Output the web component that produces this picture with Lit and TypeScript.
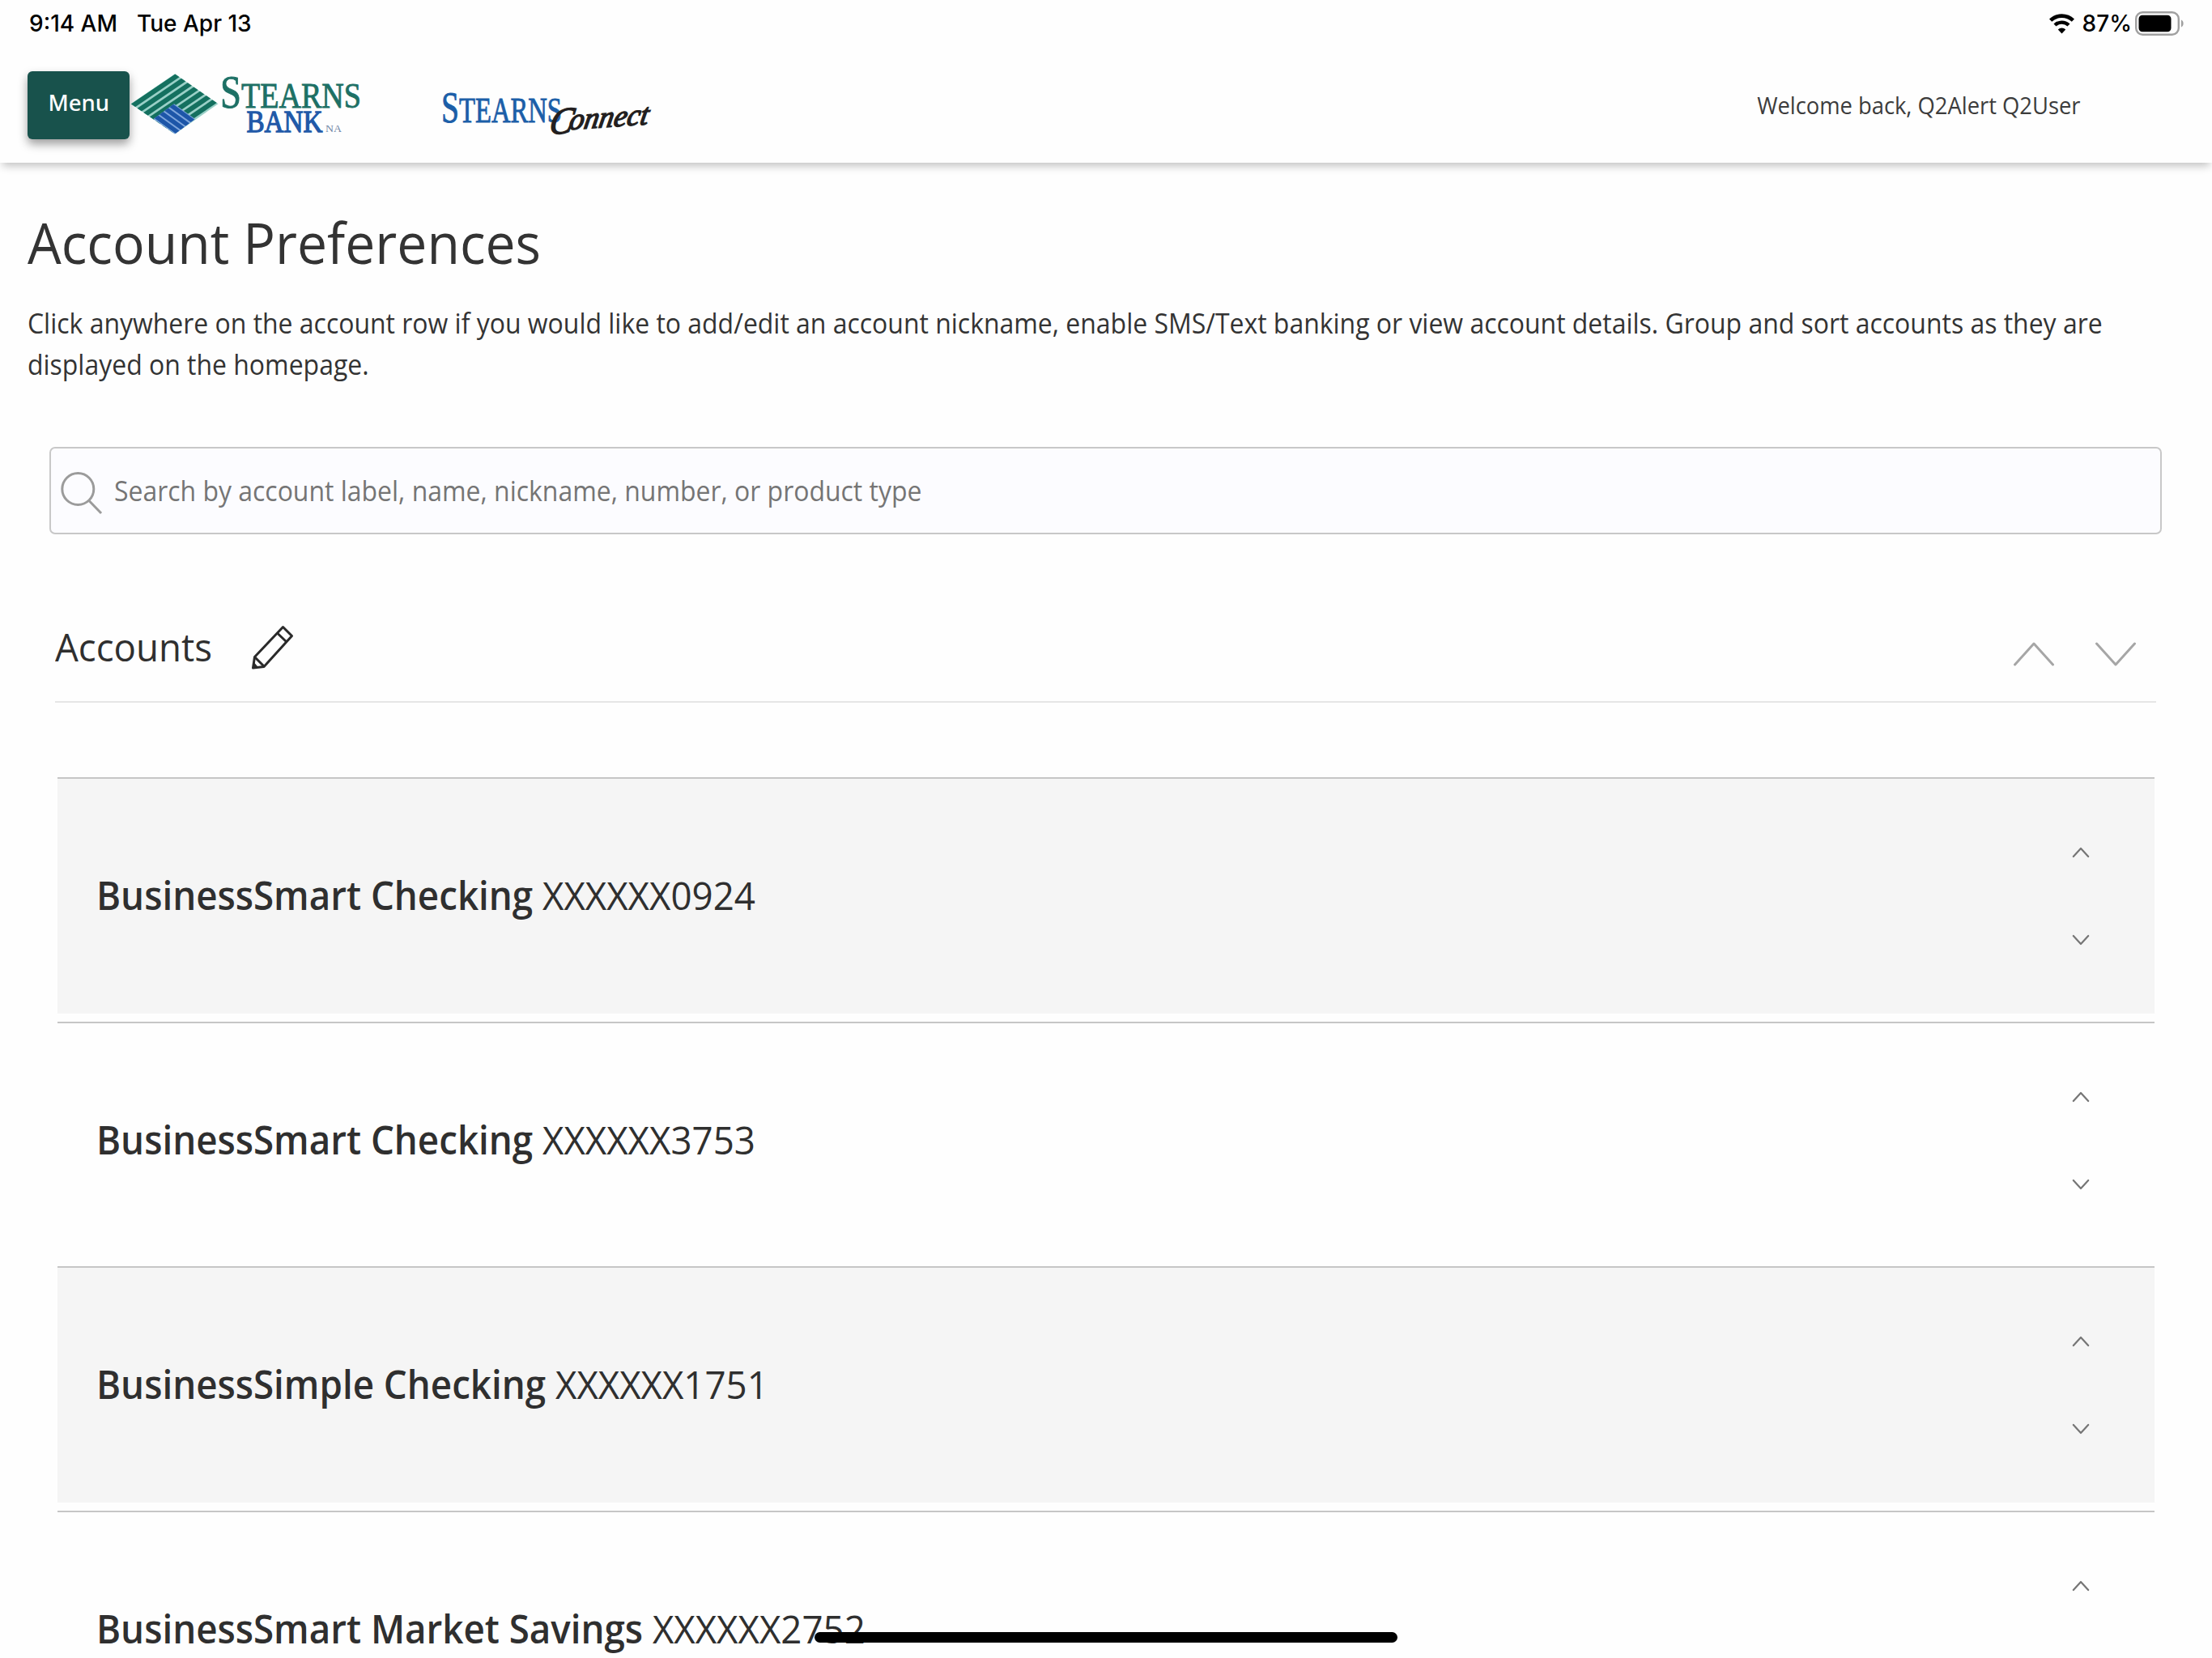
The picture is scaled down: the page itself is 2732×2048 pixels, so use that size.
import { LitElement, html, css, svg } from "lit";
import { customElement, property } from "lit/decorators.js";

interface Account {
  name: string;
  number: string;
}

const ACCOUNTS: Account[] = [
  { name: "BusinessSmart Checking", number: "XXXXXX0924" },
  { name: "BusinessSmart Checking", number: "XXXXXX3753" },
  { name: "BusinessSimple Checking", number: "XXXXXX1751" },
  { name: "BusinessSmart Market Savings", number: "XXXXXX2752" },
];

@customElement("status-bar")
class StatusBar extends LitElement {
  static styles = css`
    :host {
      display: flex;
      align-items: center;
      height: 58px;
      box-sizing: border-box;
      padding: 0 35px 0 36px;
      font: 500 28px/40px Inter, "Liberation Sans", sans-serif;
      color: #000;
    }
    .date { margin-left: 24px; }
    .wifi { margin-left: auto; margin-right: 9px; }
    .pct { margin-right: 4px; }
    svg { display: block; }
  `;
  render() {
    return html`
      <span>9:14 AM</span><span class="date">Tue Apr 13</span>
      <svg class="wifi" width="33" height="26" viewBox="0 0 33 26">
        <path d="M2.6 9.2A20 20 0 0 1 30.4 9.2" fill="none" stroke="#000" stroke-width="4.6"/>
        <path d="M8 15A12.3 12.3 0 0 1 25 15" fill="none" stroke="#000" stroke-width="4.4"/>
        <path d="M16.5 25.4L11.8 20.5A6.8 6.8 0 0 1 21.2 20.5Z"/>
      </svg>
      <span class="pct">87%</span>
      <svg width="60" height="30" viewBox="0 0 60 30">
        <rect x="1.2" y="1.2" width="52.6" height="27.6" rx="8" fill="none" stroke="#a0a0a0" stroke-width="2.4"/>
        <rect x="4.5" y="4.8" width="40" height="20.4" rx="4.5"/>
        <path d="M57 10.5C60.5 11.5 60.5 18.5 57 19.5Z" fill="#a0a0a0"/>
      </svg>
    `;
  }
}

@customElement("brand-logos")
class BrandLogos extends LitElement {
  static styles = css`
    :host { display: block; }
    svg { display: block; overflow: visible; font-family: "Liberation Serif", serif; }
  `;
  render() {
    const green = [0, 1, 2, 3, 4, 5, 6].map((i) => {
      const t = (i + 0.38) / 7;
      const x = 56 + 54 * t;
      const y = 5.4 + 37 * t;
      return svg`<line x1=${x + 6} y1=${y - 4.1} x2=${x - 62} y2=${y + 42} stroke="#14705f" stroke-width="6"/>`;
    });
    const blue = [0, 1, 2, 3].map((i) => {
      const t = (i + 0.5) / 4;
      const x = 55 - 25 * t;
      const y = 42.3 + 18.4 * t;
      return svg`<line x1=${x - 6} y1=${y - 4.3} x2=${x + 32} y2=${y + 23} stroke="#1d56a8" stroke-width="5.4"/>`;
    });
    return html`
      <svg width="660" height="90" viewBox="0 0 660 90">
        <clipPath id="d"><path d="M1.500 42.300L56 5.200L109.500 42.300L56 79.500Z"/></clipPath>
        <clipPath id="b"><path d="M55 42.300L81 61L56 79.500L29.500 61Z"/></clipPath>
        <g clip-path="url(#d)"><rect width="120" height="84" fill="#9ad0c7"/>${green}</g>
        <g clip-path="url(#b)"><rect width="120" height="84" fill="#7fa6dc"/>${blue}</g>
        <g fill="#1d7065" stroke="#1d7065" stroke-width=".9">
          <text x="112" y="47" font-size="56" textLength="26" lengthAdjust="spacingAndGlyphs">S</text>
          <text x="138" y="47" font-size="45" textLength="148" lengthAdjust="spacingAndGlyphs">TEARNS</text>
        </g>
        <text x="144.500" y="77" font-size="38" textLength="94" lengthAdjust="spacingAndGlyphs" fill="#2159a8" stroke="#2159a8" stroke-width="1.300">BANK</text>
        <text x="242" y="77" font-size="12" textLength="20" lengthAdjust="spacingAndGlyphs" fill="#7186a6">NA</text>
        <g fill="#1b5ea8" stroke="#1b5ea8" stroke-width=".9">
          <text x="385" y="64.500" font-size="54" textLength="22" lengthAdjust="spacingAndGlyphs">S</text>
          <text x="407" y="64.500" font-size="44" textLength="127" lengthAdjust="spacingAndGlyphs">TEARNS</text>
        </g>
        <g fill="#231f20" stroke="#231f20" stroke-width="1.500" font-style="italic" transform="translate(517 80) rotate(-4) skewX(-14)">
          <text x="0" y="0" font-size="46" textLength="29" lengthAdjust="spacingAndGlyphs">C</text>
          <text x="24" y="-4" font-size="37" textLength="98" lengthAdjust="spacingAndGlyphs">onnect</text>
        </g>
      </svg>
    `;
  }
}

@customElement("chevron-icon")
class ChevronIcon extends LitElement {
  @property({ type: Boolean }) down = false;
  @property({ type: Boolean }) large = false;
  static styles = css`
    :host, svg { display: block; }
    path { fill: none; stroke-linecap: round; stroke-linejoin: round; }
    .lg { stroke: #a6a6a6; stroke-width: 3; }
    .sm { stroke: #757575; stroke-width: 2.2; }
  `;
  render() {
    return this.large
      ? html`<svg width="50" height="30" viewBox="0 0 50 30"><path class="lg" d=${this.down ? "M1.500 2L25 28L48.500 2" : "M1.500 28L25 2L48.500 28"}/></svg>`
      : html`<svg width="22" height="14" viewBox="0 0 22 14"><path class="sm" d=${this.down ? "M1.800 2L11 12L20.200 2" : "M1.800 12L11 2L20.200 12"}/></svg>`;
  }
}

@customElement("account-row")
class AccountRow extends LitElement {
  @property({ attribute: false }) account!: Account;
  @property({ type: Boolean, reflect: true }) shaded = false;
  static styles = css`
    :host {
      display: flex;
      align-items: center;
      justify-content: space-between;
      box-sizing: border-box;
      height: 292px;
      margin-bottom: 10px;
      padding: 0 80px 2px 47.5px;
      border-top: 2px solid #c6c6c6;
      color: #2f2f2f;
      flex: none;
    }
    :host([shaded]) { background: #f5f5f5; }
    .label {
      font-size: 48px;
      line-height: 66px;
      white-space: nowrap;
      transform: scaleX(0.952);
      transform-origin: left;
    }
    b { font-weight: 600; }
    .sort { display: flex; flex-direction: column; gap: 94px; margin-top: 3px; }
  `;
  render() {
    return html`
      <div class="label"><b>${this.account.name}</b> ${this.account.number}</div>
      <div class="sort">
        <chevron-icon></chevron-icon>
        <chevron-icon down></chevron-icon>
      </div>
    `;
  }
}

@customElement("app-root")
class AppRoot extends LitElement {
  static styles = css`
    :host {
      display: flex;
      flex-direction: column;
      position: relative;
      width: 2732px;
      height: 2048px;
      overflow: hidden;
      background: #fefefe;
      font-family: "Open Sans", "Noto Sans", sans-serif;
      color: #333;
    }
    header {
      height: 201px;
      flex: none;
      background: #fefefe;
      box-shadow: 0 7px 10px -3px rgba(0, 0, 0, 0.24);
    }
    .bar { display: flex; align-items: flex-start; padding: 28px 163px 0 34px; }
    .menu {
      margin: 2px 0 0;
      width: 125.5px;
      height: 84px;
      border: 0;
      padding: 0 0 7px 1px;
      border-radius: 6px;
      background: #18524c;
      color: #fff;
      font: 500 27.5px "Noto Sans", sans-serif;
      box-shadow: 0 6px 12px rgba(0, 0, 0, 0.38);
    }
    .welcome {
      margin-left: auto;
      padding-top: 23.5px;
      font-size: 29px;
      line-height: 40px;
      color: #3c3c3c;
      white-space: nowrap;
      transform: scaleX(0.943);
      transform-origin: right;
    }
    h1 {
      margin: 50px 0 0 34px;
      font-weight: 400;
      font-size: 70px;
      line-height: 96px;
      white-space: nowrap;
      transform: scaleX(0.943);
      transform-origin: left;
    }
    .intro {
      margin: 27px 0 0 34px;
      width: 2780px;
      font-size: 34px;
      line-height: 51.3px;
      transform: scaleX(0.9395);
      transform-origin: left;
    }
    .search {
      display: flex;
      align-items: center;
      box-sizing: border-box;
      margin: 75px 62px 0 61px;
      height: 108px;
      flex: none;
      border: 2px solid #c8c8c8;
      border-radius: 7px;
      background: #fcfcff;
      padding-left: 11px;
    }
    .search svg { flex: none; margin-top: 4px; }
    .hint {
      margin-left: 13px;
      font-size: 34px;
      line-height: 46px;
      color: #757575;
      white-space: nowrap;
      transform: scaleX(0.9395);
      transform-origin: left;
    }
    .group {
      display: flex;
      align-items: center;
      box-sizing: border-box;
      height: 136px;
      flex: none;
      margin: 72px 69px 0 68px;
      padding-right: 25px;
      border-bottom: 2px solid #e6e6e6;
    }
    .group h2 {
      margin: 0;
      width: 241px;
      font-weight: 400;
      font-size: 48px;
      line-height: 66px;
      color: #2f2f2f;
      transform: scaleX(0.95);
      transform-origin: left;
    }
    .group .pencil { margin-top: 2px; }
    .moves { display: flex; gap: 51px; margin-left: auto; margin-top: 18px; }
    .list {
      display: flex;
      flex-direction: column;
      margin: 92px 71px 0 71px;
    }
    .home {
      position: absolute;
      left: 1006px;
      top: 2016px;
      width: 720px;
      height: 13px;
      border-radius: 7px;
      background: #000;
    }
  `;
  render() {
    return html`
      <header>
        <status-bar></status-bar>
        <div class="bar">
          <button class="menu">Menu</button>
          <brand-logos></brand-logos>
          <span class="welcome">Welcome back, Q2Alert Q2User</span>
        </div>
      </header>
      <h1>Account Preferences</h1>
      <div class="intro">
        Click anywhere on the account row if you would like to add/edit an account nickname, enable SMS/Text banking or view account details. Group and sort accounts as they are<br />displayed on the homepage.
      </div>
      <div class="search">
        <svg width="54" height="56" viewBox="0 0 54 56" fill="none" stroke="#9b9b9b" stroke-width="3">
          <circle cx="22.300" cy="24" r="19.500"/><path d="M36 38.500L51 54"/>
        </svg>
        <span class="hint">Search by account label, name, nickname, number, or product type</span>
      </div>
      <div class="group">
        <h2>Accounts</h2>
        <svg class="pencil" width="54" height="56" viewBox="0 0 54 56" fill="none" stroke="#2a2a2a" stroke-width="3" stroke-linejoin="round">
          <path d="M40.500 2.500L51.500 13.500L17 51.500L3.500 53L5.500 39.500Z"/>
          <path d="M34 10.500L45 21M6 40L17 51"/>
          <path d="M4.500 47L9 52.300L3.500 53Z" fill="#2a2a2a" stroke-width="1.500"/>
        </svg>
        <div class="moves">
          <chevron-icon large></chevron-icon>
          <chevron-icon large down></chevron-icon>
        </div>
      </div>
      <div class="list">
        ${ACCOUNTS.map((a, i) => html`<account-row .account=${a} ?shaded=${i % 2 === 0}></account-row>`)}
      </div>
      <div class="home"></div>
    `;
  }
}
